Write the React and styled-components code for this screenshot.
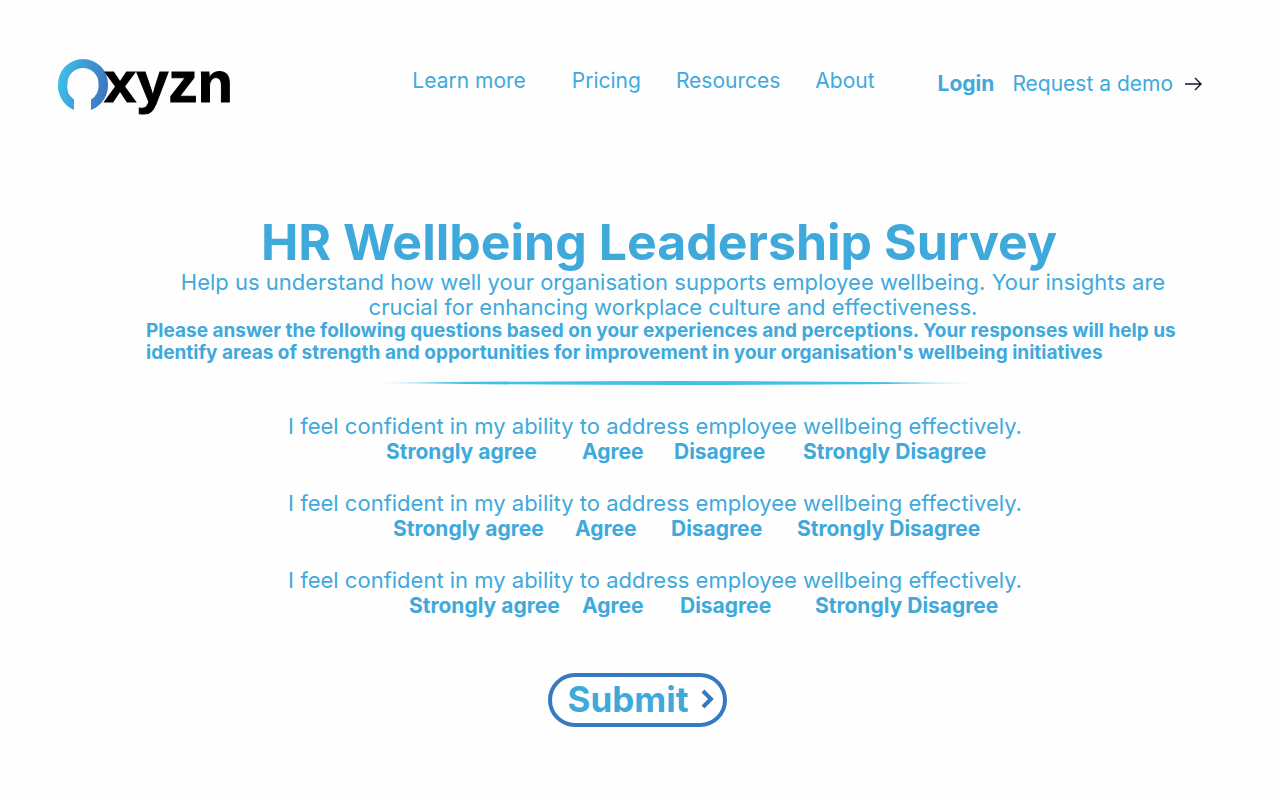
import React from "react";
import styled, { createGlobalStyle } from "styled-components";

const GlobalStyle = createGlobalStyle`
  * { box-sizing: border-box; }
  body {
    margin: 0;
    background: #fefefe;
    color: #40a9dc;
    font-family: Inter, "Open Sans", sans-serif;
  }
`;

const Header = styled.header`
  display: flex;
  align-items: center;
  padding: 48px 78px 0 56px;
`;

const LogoLink = styled.a`
  display: flex;
  margin-right: auto;
`;

const Nav = styled.nav`
  display: flex;
  align-items: center;
  margin-right: 63px;
  padding-bottom: 6px;
`;

const Account = styled.div`
  display: flex;
  align-items: center;
  gap: 18px;
`;

const TextLink = styled.a`
  display: flex;
  align-items: center;
  gap: 12px;
  color: inherit;
  font-size: 21px;
  line-height: 24px;
  font-weight: ${(p) => (p.$strong ? 700 : 400)};
  text-decoration: none;
  white-space: nowrap;
`;

const NavLink = styled(TextLink)`
  & + & { margin-left: 35px; }
  &:nth-child(2) { margin-left: 46px; }
`;

const Intro = styled.section`
  padding: 94px 74px 0 146px;
`;

const Title = styled.h1`
  margin: 0;
  padding-right: 34px;
  font-size: 50px;
  line-height: 56px;
  font-weight: 700;
  text-align: center;
`;

const Lead = styled.p`
  max-width: 1040px;
  margin: 0 auto;
  padding-right: 6px;
  font-size: 22px;
  line-height: 25px;
  text-align: center;
`;

const Instructions = styled.p`
  margin: 0;
  font-size: 19px;
  line-height: 22px;
  font-weight: 700;
`;

const Divider = styled.svg`
  display: block;
  width: 600px;
  max-width: 100%;
  height: 4px;
  margin: 17px auto 0;
`;

const Form = styled.form`
  display: flex;
  flex-direction: column;
  align-items: center;
  padding: 28px 0 72px;
`;

const Question = styled.fieldset`
  width: 750px;
  max-width: 100%;
  margin: 0 0 26px 30px;
  padding: 0;
  border: 0;
`;

const Prompt = styled.legend`
  width: 100%;
  padding: 0;
  font-size: 22px;
  line-height: 26px;
  text-align: center;
`;

const Options = styled.div`
  display: grid;
  grid-template-columns: ${(p) => p.$columns};
  padding-left: ${(p) => p.$indent};
`;

const Option = styled.label`
  font-size: 21px;
  line-height: 25px;
  font-weight: 700;
  white-space: nowrap;
  cursor: pointer;
`;

const Radio = styled.input`
  appearance: none;
  display: block;
  width: 0;
  height: 0;
  margin: 0;
`;

const Submit = styled.button`
  display: flex;
  align-items: center;
  justify-content: center;
  gap: 12px;
  width: 179px;
  height: 54px;
  margin-top: 29px;
  margin-right: 6px;
  padding: 0 8px 2px 16px;
  border: 4px solid #357abf;
  border-radius: 27px;
  background: #fff;
  color: #40a9dc;
  font-family: inherit;
  font-size: 35px;
  line-height: 40px;
  font-weight: 700;
  cursor: pointer;
`;

const links = ["Learn more", "Pricing", "Resources", "About"];
const answers = ["Strongly agree", "Agree", "Disagree", "Strongly Disagree"];
const prompt = "I feel confident in my ability to address employee wellbeing effectively.";
const questions = [
  { id: "q1", indent: "106px", columns: "196px 92px 129px auto" },
  { id: "q2", indent: "113px", columns: "182px 96px 126px auto" },
  { id: "q3", indent: "129px", columns: "173px 98px 135px auto" },
];

function Logo() {
  return (
    <svg width="184" height="72" viewBox="0 -4 184 72" overflow="visible" role="img" aria-label="Oxyzn">
      <defs>
        <linearGradient id="ring" x1="0" y1="0.3" x2="1" y2="0.5">
          <stop offset="0" stopColor="#3fc0ea" />
          <stop offset="1" stopColor="#3d75c2" />
        </linearGradient>
      </defs>
      <path
        d="M18 58A26.5 26.5 0 0 1 2 32A25 25 0 0 1 52 32A26.5 26.5 0 0 1 35 58V47.500A16 16 0 0 0 42.500 31.500A15.500 15.500 0 0 0 11.500 31.500A16 16 0 0 0 18 47.500Z"
        fill="url(#ring)"
      />
      <text
        x="48"
        y="50"
        fill="#000"
        stroke="#000"
        strokeWidth="1"
        fontFamily="'Liberation Sans', Arial, sans-serif"
        fontWeight="700"
        fontSize="58"
      >
        xyzn
      </text>
    </svg>
  );
}

function Arrow() {
  return (
    <svg width="17" height="14" viewBox="0 0 17 14" fill="none" stroke="#16132b" strokeWidth="1.4" aria-hidden="true">
      <path d="M0 7H16M10 1L16 7L10 13" />
    </svg>
  );
}

function Chevron() {
  return (
    <svg width="14" height="20" viewBox="0 0 14 20" fill="none" stroke="#357abf" strokeWidth="4" aria-hidden="true">
      <path d="M2 2L10 10L2 18" />
    </svg>
  );
}

export default function App() {
  return (
    <>
      <GlobalStyle />
      <Header>
        <LogoLink href="#home"><Logo /></LogoLink>
        <Nav>
          {links.map((l) => <NavLink key={l} href="#">{l}</NavLink>)}
        </Nav>
        <Account>
          <TextLink href="#login" $strong>Login</TextLink>
          <TextLink href="#demo">Request a demo<Arrow /></TextLink>
        </Account>
      </Header>
      <main>
        <Intro>
          <Title>HR Wellbeing Leadership Survey</Title>
          <Lead>
            Help us understand how well your organisation supports employee wellbeing. Your insights are
            crucial for enhancing workplace culture and effectiveness.
          </Lead>
          <Instructions>
            Please answer the following questions based on your experiences and perceptions. Your responses will help us
            identify areas of strength and opportunities for improvement in your organisation's wellbeing initiatives
          </Instructions>
          <Divider viewBox="0 0 600 4" preserveAspectRatio="none" aria-hidden="true">
            <defs>
              <linearGradient id="fade" x1="0" x2="1" y1="0" y2="0">
                <stop offset="0" stopColor="#45bfe6" stopOpacity="0.2" />
                <stop offset="0.15" stopColor="#45bfe6" />
                <stop offset="0.85" stopColor="#45bfe6" />
                <stop offset="1" stopColor="#45bfe6" stopOpacity="0.2" />
              </linearGradient>
            </defs>
            <path d="M0 2Q300 -2 600 2Q300 6 0 2Z" fill="url(#fade)" />
          </Divider>
        </Intro>
        <Form onSubmit={(e) => e.preventDefault()}>
          {questions.map((q) => (
            <Question key={q.id}>
              <Prompt>{prompt}</Prompt>
              <Options $indent={q.indent} $columns={q.columns}>
                {answers.map((a) => (
                  <Option key={a}>
                    <Radio type="radio" name={q.id} value={a} />
                    {a}
                  </Option>
                ))}
              </Options>
            </Question>
          ))}
          <Submit type="submit">Submit<Chevron /></Submit>
        </Form>
      </main>
    </>
  );
}
